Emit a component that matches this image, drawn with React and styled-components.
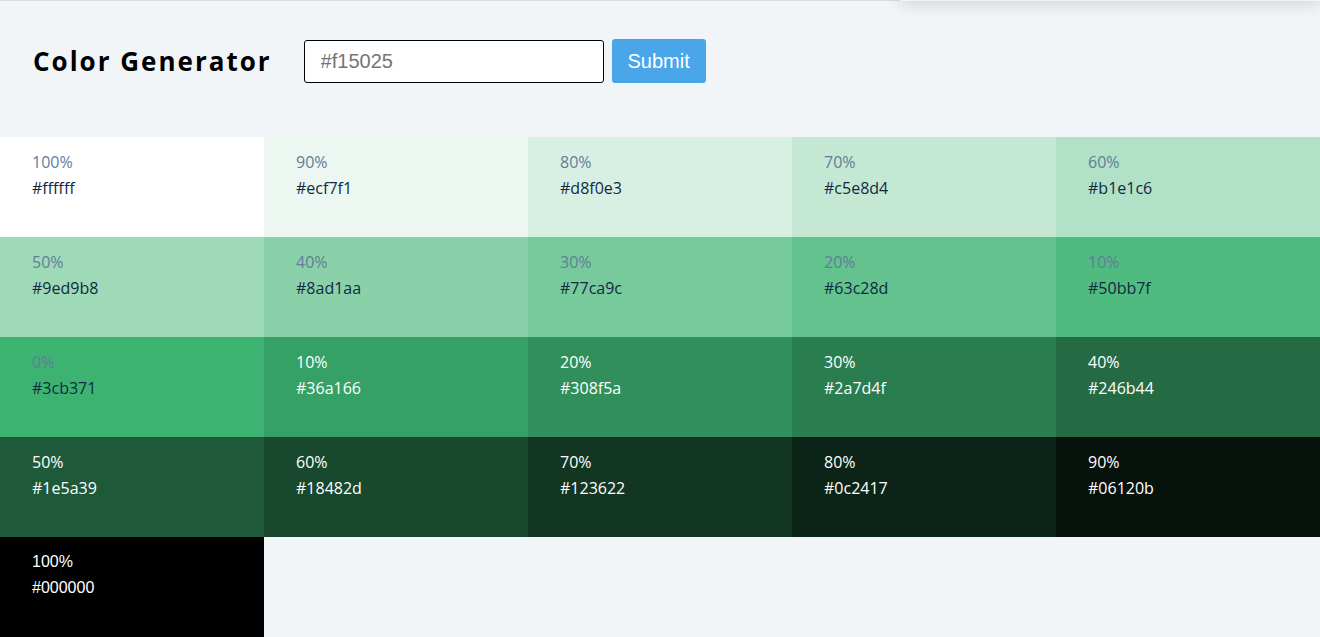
import React, { useState } from 'react'
import styled, { createGlobalStyle } from 'styled-components'

const GlobalStyle = createGlobalStyle`
  * {
    box-sizing: border-box;
    margin: 0;
    padding: 0;
  }
  body {
    background: #f1f5f8;
    font-family: 'Open Sans', 'Liberation Sans', sans-serif;
    color: #102a42;
    overflow: hidden;
  }
`

const colors = [
  'ffffff', 'ecf7f1', 'd8f0e3', 'c5e8d4', 'b1e1c6',
  '9ed9b8', '8ad1aa', '77ca9c', '63c28d', '50bb7f',
  '3cb371',
  '36a166', '308f5a', '2a7d4f', '246b44', '1e5a39',
  '18482d', '123622', '0c2417', '06120b', '000000',
]

const Page = styled.main`
  position: relative;
  border-top: 1px solid #d8dcdf;
  min-height: 637px;
`

const Toast = styled.div`
  position: absolute;
  top: -60px;
  right: 0;
  width: 420px;
  height: 60px;
  background: #f1f5f8;
  box-shadow: 0 4px 14px rgba(0, 0, 0, 0.12);
`

const Header = styled.section`
  display: flex;
  align-items: center;
  height: 120px;
  padding-left: 33px;
  margin-bottom: 16px;
`

const Title = styled.h3`
  font-family: 'Open Sans', sans-serif;
  font-weight: 700;
  font-size: 26px;
  letter-spacing: 2px;
  color: #000;
  margin-right: 32px;
`

const Form = styled.form`
  display: flex;
  align-items: center;
`

const Input = styled.input`
  width: 300px;
  height: 43px;
  border: 1px solid #000;
  border-radius: 3px;
  padding: 0 16px;
  font-family: 'Liberation Sans', Arial, sans-serif;
  font-size: 20px;
  color: #222;
  background: #fff;
  outline: none;
  &::placeholder {
    color: #757575;
  }
`

const SubmitButton = styled.button`
  margin-left: 8px;
  width: 94px;
  height: 44px;
  border: none;
  border-radius: 3px;
  background: #49a6e9;
  color: #fff;
  font-family: 'Liberation Sans', Arial, sans-serif;
  font-size: 20px;
  cursor: pointer;
`

const Grid = styled.section`
  display: grid;
  grid-template-columns: repeat(5, 1fr);
  grid-auto-rows: 100px;
`

const Tile = styled.article`
  background: #${(p) => p.$hex};
  padding: 12px 32px;
  font-size: 16px;
  line-height: 26px;
  color: ${(p) => (p.$dark ? '#fff' : '#102a42')};
  font-family: ${(p) =>
    p.$last ? "'Liberation Sans', Arial, sans-serif" : "'Open Sans', sans-serif"};
`

const Percent = styled.p`
  color: ${(p) => (p.$dark ? '#fff' : '#617d98')};
`

const HexValue = styled.p``

const App = () => {
  const [value, setValue] = useState('')

  return (
    <Page>
      <GlobalStyle />
      <Toast />
      <Header>
        <Title>Color Generator</Title>
        <Form onSubmit={(e) => e.preventDefault()}>
          <Input
            type="text"
            value={value}
            placeholder="#f15025"
            onChange={(e) => setValue(e.target.value)}
          />
          <SubmitButton type="submit">Submit</SubmitButton>
        </Form>
      </Header>
      <Grid>
        {colors.map((hex, index) => {
          const dark = index > 10
          const weight = Math.abs(10 - index) * 10
          return (
            <Tile key={index} $hex={hex} $dark={dark} $last={index === 20}>
              <Percent $dark={dark}>{weight}%</Percent>
              <HexValue>#{hex}</HexValue>
            </Tile>
          )
        })}
      </Grid>
    </Page>
  )
}

export default App
